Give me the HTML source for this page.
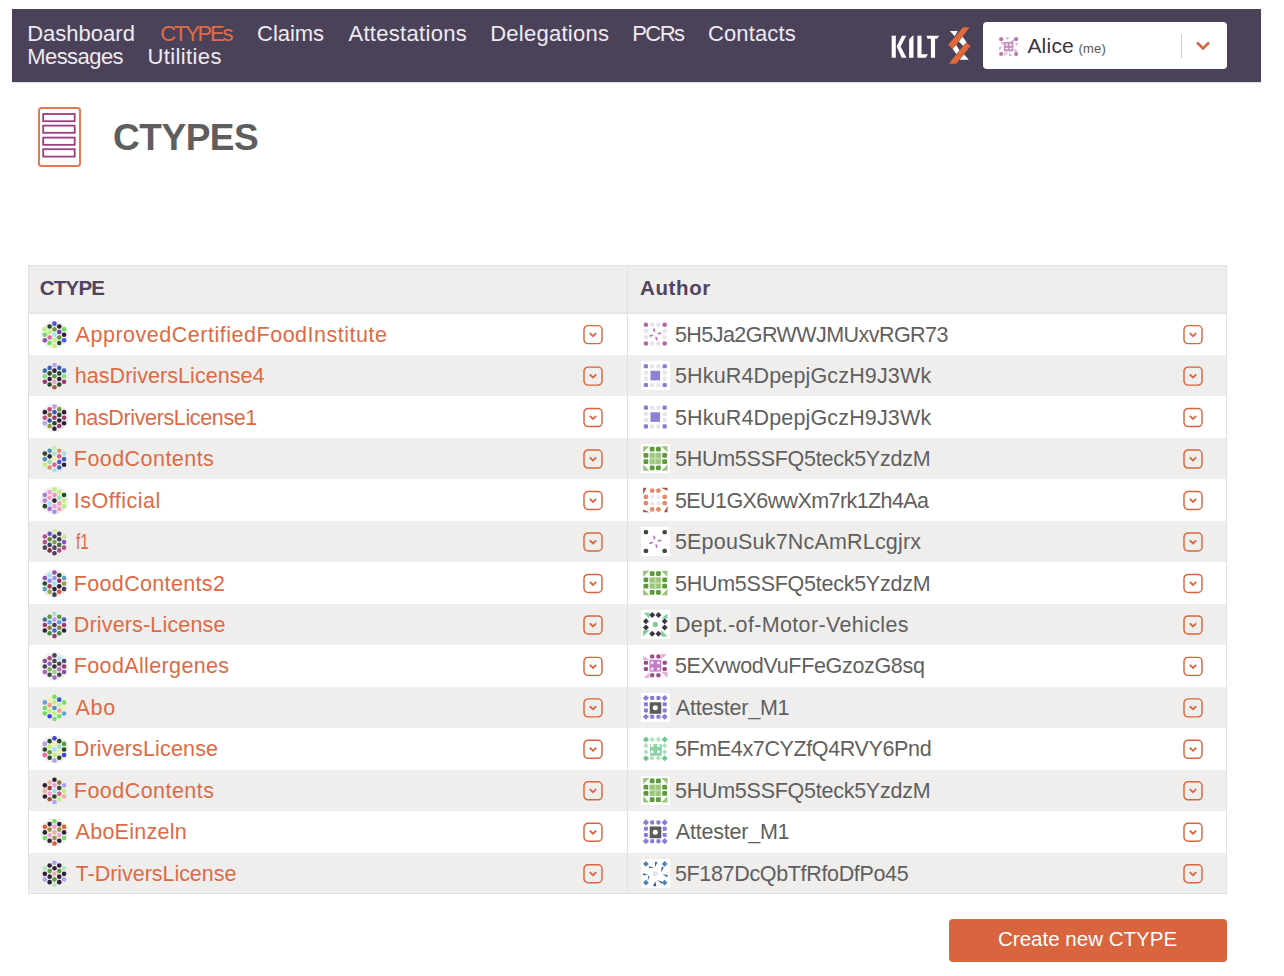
<!DOCTYPE html>
<html><head><meta charset="utf-8"><title>KILT CTYPEs</title>
<style>
*{margin:0;padding:0;box-sizing:border-box}
html,body{width:1284px;height:976px;overflow:hidden;background:#fff}
body{position:relative;font-family:"Liberation Sans",sans-serif}
.t{position:absolute;white-space:nowrap;line-height:normal}
.bl{display:inline-block;width:0;height:0;vertical-align:baseline}
.ic{position:absolute;display:block}
.jd{position:absolute;width:29px;height:29px;background:#fff}
.box{position:absolute}
</style></head><body>

<div class="box" style="left:12px;top:9px;width:1249px;height:73px;background:#4b425a;box-shadow:0 1px 1px rgba(0,0,0,0.12)"></div>
<svg class="ic" style="left:886px;top:30px" width="56" height="32" viewBox="0 0 1284 734"><g fill="#fff">
<rect x="130" y="130" width="95" height="505"/>
<polygon points="245,380 365,130 465,130 335,380 470,635 360,635"/>
<polygon points="530,210 610,130 630,130 630,635 530,635"/>
<polygon points="720,130 815,130 815,555 965,555 910,635 720,635"/>
<polygon points="930,130 1220,130 1170,200 1125,200 1125,635 1030,635 1030,200 950,200"/>
</g></svg>
<svg class="ic" style="left:940px;top:22px" width="40" height="48" viewBox="0 0 813 976">
<g fill="#fff">
<polygon points="200,185 360,185 300,290"/>
<polygon points="380,390 460,300 540,410 470,490"/>
<polygon points="255,545 330,470 400,580 330,650"/>
<polygon points="490,660 585,770 395,770"/>
</g><g fill="#e0683a">
<polygon points="470,105 600,105 330,470 255,545 165,465"/>
<polygon points="530,410 620,490 330,850 180,850 470,490"/>
</g></svg>
<div class="box" style="left:983px;top:22px;width:244px;height:47px;background:#fff;border-radius:4px"></div>
<div class="box" style="left:1181px;top:34px;width:1px;height:24px;background:#cfcfcf"></div>
<svg class="ic" style="left:1194px;top:40px" width="18" height="12" viewBox="0 0 18 12"><polyline points="3,2.5 9,8.5 15,2.5" fill="none" stroke="#d9653e" stroke-width="2.6"/></svg>
<svg class="ic" style="left:995px;top:33px" width="28" height="28" viewBox="0 0 976 976">
<g fill="#dfb0d8">
<polygon points="350,150 480,150 455,265"/>
<polygon points="520,300 690,190 650,310"/>
<polygon points="170,310 300,310 290,430"/>
<polygon points="720,350 820,350 720,480"/>
<polygon points="140,490 260,490 140,610"/>
<polygon points="320,690 460,670 330,810"/>
<polygon points="490,690 610,800 490,800"/>
<polygon points="680,540 800,650 680,660"/>
</g>
<g fill="#b87aa8"><circle cx="215" cy="215" r="72"/><circle cx="735" cy="215" r="72"/><circle cx="215" cy="730" r="72"/><circle cx="735" cy="730" r="72"/></g>
<rect x="310" y="310" width="330" height="330" fill="#c48fbc"/>
<g fill="#fbf3f8"><ellipse cx="405" cy="410" rx="35" ry="55"/><ellipse cx="545" cy="410" rx="35" ry="55"/><ellipse cx="410" cy="545" rx="50" ry="28"/><ellipse cx="545" cy="545" rx="50" ry="28"/></g>
</svg>
<svg class="ic" style="left:37px;top:106px" width="45" height="62" viewBox="0 0 45 62">
<rect x="2" y="2" width="41" height="58" rx="2.5" fill="none" stroke="#e07a56" stroke-width="2"/>
<g fill="none" stroke="#9a3f7e" stroke-width="1.8">
<rect x="6.2" y="8" width="31.5" height="7.2"/><rect x="6.2" y="19.6" width="31.5" height="7.2"/>
<rect x="6.2" y="31.6" width="31.5" height="7.2"/><rect x="6.2" y="43.2" width="31.5" height="7.4"/>
</g></svg>
<div class="box" style="left:29px;top:266px;width:1197px;height:47px;background:#efeeed"></div>
<div class="box" style="left:29px;top:312px;width:1197px;height:2px;background:#e3e5eb"></div>
<div class="box" style="left:29px;top:354.87px;width:1197px;height:41.47px;background:#efeeed"></div>
<div class="box" style="left:29px;top:437.81px;width:1197px;height:41.47px;background:#efeeed"></div>
<div class="box" style="left:29px;top:520.75px;width:1197px;height:41.47px;background:#efeeed"></div>
<div class="box" style="left:29px;top:603.69px;width:1197px;height:41.47px;background:#efeeed"></div>
<div class="box" style="left:29px;top:686.63px;width:1197px;height:41.47px;background:#efeeed"></div>
<div class="box" style="left:29px;top:769.57px;width:1197px;height:41.47px;background:#efeeed"></div>
<div class="box" style="left:29px;top:852.51px;width:1197px;height:41.47px;background:#efeeed"></div>
<div class="box" style="left:627px;top:266px;width:1px;height:627px;background:#dfe1e8"></div>
<svg class="ic" style="left:39px;top:319px" width="31" height="31" viewBox="-15.45 -15.74 31 31"><circle cx="0" cy="0" r="14" fill="#eeeeee"/><circle cx="0" cy="-11.1" r="2.3" fill="#5050e0"/><circle cx="-4.8" cy="-8.3" r="2.3" fill="#2a4a2a"/><circle cx="4.8" cy="-8.3" r="2.3" fill="#302038"/><circle cx="-9.6" cy="-5.55" r="2.3" fill="#c0f080"/><circle cx="0" cy="-5.55" r="2.3" fill="#6a9a40"/><circle cx="9.6" cy="-5.55" r="2.3" fill="#70e060"/><circle cx="-4.8" cy="-2.8" r="2.3" fill="#c0f080"/><circle cx="4.8" cy="-2.8" r="2.3" fill="#7040a0"/><circle cx="-9.6" cy="0" r="2.3" fill="#70e060"/><circle cx="0" cy="0" r="2.3" fill="#a0e8e8"/><circle cx="9.6" cy="0" r="2.3" fill="#302038"/><circle cx="-4.8" cy="2.8" r="2.3" fill="#e070a0"/><circle cx="4.8" cy="2.8" r="2.3" fill="#6a9a40"/><circle cx="-9.6" cy="5.55" r="2.3" fill="#9050b0"/><circle cx="0" cy="5.55" r="2.3" fill="#c0f080"/><circle cx="9.6" cy="5.55" r="2.3" fill="#5050f0"/><circle cx="-4.8" cy="8.3" r="2.3" fill="#70e060"/><circle cx="4.8" cy="8.3" r="2.3" fill="#2a4a2a"/><circle cx="0" cy="11.1" r="2.3" fill="#c0f080"/></svg>
<div class="jd" style="left:641px;top:320px"><svg width="29" height="29" viewBox="-1.80 -1.63 29 29" style="position:absolute;left:0;top:0"><circle cx="3.125" cy="3.125" r="2.3" fill="#b565a7"/><circle cx="21.875" cy="3.125" r="2.3" fill="#b565a7"/><circle cx="3.125" cy="21.875" r="2.3" fill="#b565a7"/><circle cx="21.875" cy="21.875" r="2.3" fill="#b565a7"/><circle cx="9.375" cy="3.125" r="2.2" fill="#e4e4ea"/><circle cx="15.625" cy="3.125" r="2.2" fill="#e4e4ea"/><circle cx="3.125" cy="9.375" r="2.2" fill="#e4e4ea"/><circle cx="21.875" cy="9.375" r="2.2" fill="#e4e4ea"/><circle cx="3.125" cy="15.625" r="2.2" fill="#e4e4ea"/><circle cx="21.875" cy="15.625" r="2.2" fill="#e4e4ea"/><circle cx="9.375" cy="21.875" r="2.2" fill="#e4e4ea"/><circle cx="15.625" cy="21.875" r="2.2" fill="#e4e4ea"/><ellipse cx="12.5" cy="8.5" rx="0.95" ry="2.1" fill="#c070b8" transform="rotate(-15 12.5 12.8)"/><ellipse cx="12.5" cy="8.5" rx="0.95" ry="2.1" fill="#c070b8" transform="rotate(75 12.5 12.8)"/><ellipse cx="12.5" cy="8.5" rx="0.95" ry="2.1" fill="#c070b8" transform="rotate(165 12.5 12.8)"/><ellipse cx="12.5" cy="8.5" rx="0.95" ry="2.1" fill="#c070b8" transform="rotate(255 12.5 12.8)"/></svg></div>
<svg class="ic" style="left:583px;top:324px" width="21" height="21" viewBox="0.00 -0.63 21 21"><rect x="1" y="1" width="18" height="18" rx="4" fill="none" stroke="#d9653e" stroke-width="1.45"/><polyline points="6.8,8.4 10,11.5 13.2,8.4" fill="none" stroke="#d9653e" stroke-width="1.8"/></svg>
<svg class="ic" style="left:1183px;top:324px" width="21" height="21" viewBox="0.00 -0.63 21 21"><rect x="1" y="1" width="18" height="18" rx="4" fill="none" stroke="#d9653e" stroke-width="1.45"/><polyline points="6.8,8.4 10,11.5 13.2,8.4" fill="none" stroke="#d9653e" stroke-width="1.8"/></svg>
<svg class="ic" style="left:39px;top:361px" width="31" height="31" viewBox="-15.45 -15.20 31 31"><circle cx="0" cy="0" r="14" fill="#eeeeee"/><circle cx="0" cy="-11.1" r="2.3" fill="#c0a0f0"/><circle cx="-4.8" cy="-8.3" r="2.3" fill="#4060b0"/><circle cx="4.8" cy="-8.3" r="2.3" fill="#4060b0"/><circle cx="-9.6" cy="-5.55" r="2.3" fill="#4070b0"/><circle cx="0" cy="-5.55" r="2.3" fill="#302038"/><circle cx="9.6" cy="-5.55" r="2.3" fill="#4060b0"/><circle cx="-4.8" cy="-2.8" r="2.3" fill="#2a4a2a"/><circle cx="4.8" cy="-2.8" r="2.3" fill="#2a4a2a"/><circle cx="-9.6" cy="0" r="2.3" fill="#80e080"/><circle cx="0" cy="0" r="2.3" fill="#5a9a40"/><circle cx="9.6" cy="0" r="2.3" fill="#80e080"/><circle cx="-4.8" cy="2.8" r="2.3" fill="#302038"/><circle cx="4.8" cy="2.8" r="2.3" fill="#302038"/><circle cx="-9.6" cy="5.55" r="2.3" fill="#9a3a6a"/><circle cx="0" cy="5.55" r="2.3" fill="#f0a0c0"/><circle cx="9.6" cy="5.55" r="2.3" fill="#9a3a6a"/><circle cx="-4.8" cy="8.3" r="2.3" fill="#2a4a2a"/><circle cx="4.8" cy="8.3" r="2.3" fill="#2a4a2a"/><circle cx="0" cy="11.1" r="2.3" fill="#b05a3a"/></svg>
<div class="jd" style="left:641px;top:361px"><svg width="29" height="29" viewBox="-1.80 -2.10 29 29" style="position:absolute;left:0;top:0"><rect x="1.025" y="1.025" width="4.2" height="4.2" rx="1.2" fill="#8a7bd3"/><rect x="19.775" y="1.025" width="4.2" height="4.2" rx="1.2" fill="#8a7bd3"/><rect x="1.025" y="19.775" width="4.2" height="4.2" rx="1.2" fill="#8a7bd3"/><rect x="19.775" y="19.775" width="4.2" height="4.2" rx="1.2" fill="#8a7bd3"/><circle cx="9.375" cy="3.125" r="2.2" fill="#e4e4ea"/><circle cx="15.625" cy="3.125" r="2.2" fill="#e4e4ea"/><circle cx="3.125" cy="9.375" r="2.2" fill="#e4e4ea"/><circle cx="21.875" cy="9.375" r="2.2" fill="#e4e4ea"/><circle cx="3.125" cy="15.625" r="2.2" fill="#e4e4ea"/><circle cx="21.875" cy="15.625" r="2.2" fill="#e4e4ea"/><circle cx="9.375" cy="21.875" r="2.2" fill="#e4e4ea"/><circle cx="15.625" cy="21.875" r="2.2" fill="#e4e4ea"/><rect x="7.7" y="7.7" width="9.6" height="9.6" fill="#8f80d6"/></svg></div>
<svg class="ic" style="left:583px;top:366px" width="21" height="21" viewBox="0.00 -0.10 21 21"><rect x="1" y="1" width="18" height="18" rx="4" fill="none" stroke="#d9653e" stroke-width="1.45"/><polyline points="6.8,8.4 10,11.5 13.2,8.4" fill="none" stroke="#d9653e" stroke-width="1.8"/></svg>
<svg class="ic" style="left:1183px;top:366px" width="21" height="21" viewBox="0.00 -0.10 21 21"><rect x="1" y="1" width="18" height="18" rx="4" fill="none" stroke="#d9653e" stroke-width="1.45"/><polyline points="6.8,8.4 10,11.5 13.2,8.4" fill="none" stroke="#d9653e" stroke-width="1.8"/></svg>
<svg class="ic" style="left:39px;top:402px" width="31" height="31" viewBox="-15.45 -15.68 31 31"><circle cx="0" cy="0" r="14" fill="#eeeeee"/><circle cx="0" cy="-11.1" r="2.3" fill="#c0a0f0"/><circle cx="-4.8" cy="-8.3" r="2.3" fill="#c05070"/><circle cx="4.8" cy="-8.3" r="2.3" fill="#7a9a40"/><circle cx="-9.6" cy="-5.55" r="2.3" fill="#302038"/><circle cx="0" cy="-5.55" r="2.3" fill="#4060b0"/><circle cx="9.6" cy="-5.55" r="2.3" fill="#302038"/><circle cx="-4.8" cy="-2.8" r="2.3" fill="#8a6a30"/><circle cx="4.8" cy="-2.8" r="2.3" fill="#2a4030"/><circle cx="-9.6" cy="0" r="2.3" fill="#c05080"/><circle cx="0" cy="0" r="2.3" fill="#9a3a6a"/><circle cx="9.6" cy="0" r="2.3" fill="#9a3a6a"/><circle cx="-4.8" cy="2.8" r="2.3" fill="#4050a0"/><circle cx="4.8" cy="2.8" r="2.3" fill="#302038"/><circle cx="-9.6" cy="5.55" r="2.3" fill="#c0a0f0"/><circle cx="0" cy="5.55" r="2.3" fill="#2a4a2a"/><circle cx="9.6" cy="5.55" r="2.3" fill="#302038"/><circle cx="-4.8" cy="8.3" r="2.3" fill="#8aa040"/><circle cx="4.8" cy="8.3" r="2.3" fill="#9a3a6a"/><circle cx="0" cy="11.1" r="2.3" fill="#302038"/></svg>
<div class="jd" style="left:641px;top:403px"><svg width="29" height="29" viewBox="-1.80 -1.57 29 29" style="position:absolute;left:0;top:0"><rect x="1.025" y="1.025" width="4.2" height="4.2" rx="1.2" fill="#8a7bd3"/><rect x="19.775" y="1.025" width="4.2" height="4.2" rx="1.2" fill="#8a7bd3"/><rect x="1.025" y="19.775" width="4.2" height="4.2" rx="1.2" fill="#8a7bd3"/><rect x="19.775" y="19.775" width="4.2" height="4.2" rx="1.2" fill="#8a7bd3"/><circle cx="9.375" cy="3.125" r="2.2" fill="#e4e4ea"/><circle cx="15.625" cy="3.125" r="2.2" fill="#e4e4ea"/><circle cx="3.125" cy="9.375" r="2.2" fill="#e4e4ea"/><circle cx="21.875" cy="9.375" r="2.2" fill="#e4e4ea"/><circle cx="3.125" cy="15.625" r="2.2" fill="#e4e4ea"/><circle cx="21.875" cy="15.625" r="2.2" fill="#e4e4ea"/><circle cx="9.375" cy="21.875" r="2.2" fill="#e4e4ea"/><circle cx="15.625" cy="21.875" r="2.2" fill="#e4e4ea"/><rect x="7.7" y="7.7" width="9.6" height="9.6" fill="#8f80d6"/></svg></div>
<svg class="ic" style="left:583px;top:407px" width="21" height="21" viewBox="0.00 -0.57 21 21"><rect x="1" y="1" width="18" height="18" rx="4" fill="none" stroke="#d9653e" stroke-width="1.45"/><polyline points="6.8,8.4 10,11.5 13.2,8.4" fill="none" stroke="#d9653e" stroke-width="1.8"/></svg>
<svg class="ic" style="left:1183px;top:407px" width="21" height="21" viewBox="0.00 -0.57 21 21"><rect x="1" y="1" width="18" height="18" rx="4" fill="none" stroke="#d9653e" stroke-width="1.45"/><polyline points="6.8,8.4 10,11.5 13.2,8.4" fill="none" stroke="#d9653e" stroke-width="1.8"/></svg>
<svg class="ic" style="left:39px;top:444px" width="31" height="31" viewBox="-15.45 -15.14 31 31"><circle cx="0" cy="0" r="14" fill="#eeeeee"/><circle cx="0" cy="-11.1" r="2.3" fill="#c0f0a0"/><circle cx="-4.8" cy="-8.3" r="2.3" fill="#5090b0"/><circle cx="4.8" cy="-8.3" r="2.3" fill="#e09070"/><circle cx="-9.6" cy="-5.55" r="2.3" fill="#2a4a2a"/><circle cx="0" cy="-5.55" r="2.3" fill="#b0e0c0"/><circle cx="9.6" cy="-5.55" r="2.3" fill="#a0e0e0"/><circle cx="-4.8" cy="-2.8" r="2.3" fill="#302038"/><circle cx="4.8" cy="-2.8" r="2.3" fill="#e06090"/><circle cx="-9.6" cy="0" r="2.3" fill="#5090b0"/><circle cx="0" cy="0" r="2.3" fill="#f0f0a0"/><circle cx="9.6" cy="0" r="2.3" fill="#4060b0"/><circle cx="-4.8" cy="2.8" r="2.3" fill="#a0e0b0"/><circle cx="4.8" cy="2.8" r="2.3" fill="#5050e0"/><circle cx="-9.6" cy="5.55" r="2.3" fill="#c0f080"/><circle cx="0" cy="5.55" r="2.3" fill="#e06090"/><circle cx="9.6" cy="5.55" r="2.3" fill="#302038"/><circle cx="-4.8" cy="8.3" r="2.3" fill="#e09070"/><circle cx="4.8" cy="8.3" r="2.3" fill="#4060b0"/><circle cx="0" cy="11.1" r="2.3" fill="#a0e0f0"/></svg>
<div class="jd" style="left:641px;top:444px"><svg width="29" height="29" viewBox="-1.80 -2.04 29 29" style="position:absolute;left:0;top:0"><polygon points="0.3,0.3 6.5625,0.3 0.3,6.5625" fill="#9cc57c"/><polygon points="24.7,0.3 24.7,6.5625 18.4375,0.3" fill="#9cc57c"/><polygon points="0.3,24.7 0.3,18.4375 6.5625,24.7" fill="#9cc57c"/><polygon points="24.7,24.7 18.4375,24.7 24.7,18.4375" fill="#9cc57c"/><rect x="6.975" y="0.7250000000000001" width="4.8" height="4.8" rx="1.2" fill="#5b9a3d"/><rect x="13.225" y="0.7250000000000001" width="4.8" height="4.8" rx="1.2" fill="#5b9a3d"/><rect x="0.7250000000000001" y="6.975" width="4.8" height="4.8" rx="1.2" fill="#5b9a3d"/><rect x="19.475" y="6.975" width="4.8" height="4.8" rx="1.2" fill="#5b9a3d"/><rect x="0.7250000000000001" y="13.225" width="4.8" height="4.8" rx="1.2" fill="#5b9a3d"/><rect x="19.475" y="13.225" width="4.8" height="4.8" rx="1.2" fill="#5b9a3d"/><rect x="6.975" y="19.475" width="4.8" height="4.8" rx="1.2" fill="#5b9a3d"/><rect x="13.225" y="19.475" width="4.8" height="4.8" rx="1.2" fill="#5b9a3d"/><rect x="6.6" y="6.6" width="11.8" height="11.8" fill="#bcdca4"/><rect x="7.175" y="7.175" width="4.4" height="4.4" rx="0.5" fill="#9cc57c"/><rect x="13.425" y="7.175" width="4.4" height="4.4" rx="0.5" fill="#9cc57c"/><rect x="7.175" y="13.425" width="4.4" height="4.4" rx="0.5" fill="#9cc57c"/><rect x="13.425" y="13.425" width="4.4" height="4.4" rx="0.5" fill="#9cc57c"/></svg></div>
<svg class="ic" style="left:583px;top:449px" width="21" height="21" viewBox="0.00 -0.04 21 21"><rect x="1" y="1" width="18" height="18" rx="4" fill="none" stroke="#d9653e" stroke-width="1.45"/><polyline points="6.8,8.4 10,11.5 13.2,8.4" fill="none" stroke="#d9653e" stroke-width="1.8"/></svg>
<svg class="ic" style="left:1183px;top:449px" width="21" height="21" viewBox="0.00 -0.04 21 21"><rect x="1" y="1" width="18" height="18" rx="4" fill="none" stroke="#d9653e" stroke-width="1.45"/><polyline points="6.8,8.4 10,11.5 13.2,8.4" fill="none" stroke="#d9653e" stroke-width="1.8"/></svg>
<svg class="ic" style="left:39px;top:485px" width="31" height="31" viewBox="-15.45 -15.62 31 31"><circle cx="0" cy="0" r="14" fill="#eeeeee"/><circle cx="0" cy="-11.1" r="2.3" fill="#c0f080"/><circle cx="-4.8" cy="-8.3" r="2.3" fill="#f0a0d0"/><circle cx="4.8" cy="-8.3" r="2.3" fill="#c0f080"/><circle cx="-9.6" cy="-5.55" r="2.3" fill="#a080e0"/><circle cx="0" cy="-5.55" r="2.3" fill="#f090c0"/><circle cx="9.6" cy="-5.55" r="2.3" fill="#2a4a2a"/><circle cx="-4.8" cy="-2.8" r="2.3" fill="#f0a0c0"/><circle cx="4.8" cy="-2.8" r="2.3" fill="#a0e0b0"/><circle cx="-9.6" cy="0" r="2.3" fill="#c080d0"/><circle cx="0" cy="0" r="2.3" fill="#302038"/><circle cx="9.6" cy="0" r="2.3" fill="#c0f080"/><circle cx="-4.8" cy="2.8" r="2.3" fill="#a0e0f0"/><circle cx="4.8" cy="2.8" r="2.3" fill="#f0a0c0"/><circle cx="-9.6" cy="5.55" r="2.3" fill="#2a4a2a"/><circle cx="0" cy="5.55" r="2.3" fill="#f0a0d0"/><circle cx="9.6" cy="5.55" r="2.3" fill="#c0f080"/><circle cx="-4.8" cy="8.3" r="2.3" fill="#b070d0"/><circle cx="4.8" cy="8.3" r="2.3" fill="#f0a0c0"/><circle cx="0" cy="11.1" r="2.3" fill="#a090f0"/></svg>
<div class="jd" style="left:641px;top:486px"><svg width="29" height="29" viewBox="-1.80 -1.51 29 29" style="position:absolute;left:0;top:0"><polygon points="0.3,0.3 3.75,0.3 0.3,6.875000000000001" fill="#a8503e"/><polygon points="18.125,0.3 24.7,0.3 24.7,3.125" fill="#a8503e"/><polygon points="0.3,21.875 0.3,24.7 6.875000000000001,24.7" fill="#a8503e"/><polygon points="24.7,18.125 24.7,24.7 21.25,24.7" fill="#a8503e"/><circle cx="9.375" cy="3.125" r="2.4" fill="#e38a6c"/><circle cx="15.625" cy="3.125" r="2.4" fill="#e38a6c"/><circle cx="3.125" cy="9.375" r="2.4" fill="#e38a6c"/><circle cx="21.875" cy="9.375" r="2.4" fill="#e38a6c"/><circle cx="3.125" cy="15.625" r="2.4" fill="#e38a6c"/><circle cx="21.875" cy="15.625" r="2.4" fill="#e38a6c"/><circle cx="9.375" cy="21.875" r="2.4" fill="#e38a6c"/><circle cx="15.625" cy="21.875" r="2.4" fill="#e38a6c"/><circle cx="9.375" cy="9.375" r="2.0" fill="#e8e8ec"/><circle cx="15.625" cy="9.375" r="2.0" fill="#e8e8ec"/><circle cx="9.375" cy="15.625" r="2.0" fill="#e8e8ec"/><circle cx="15.625" cy="15.625" r="2.0" fill="#e8e8ec"/></svg></div>
<svg class="ic" style="left:583px;top:490px" width="21" height="21" viewBox="0.00 -0.51 21 21"><rect x="1" y="1" width="18" height="18" rx="4" fill="none" stroke="#d9653e" stroke-width="1.45"/><polyline points="6.8,8.4 10,11.5 13.2,8.4" fill="none" stroke="#d9653e" stroke-width="1.8"/></svg>
<svg class="ic" style="left:1183px;top:490px" width="21" height="21" viewBox="0.00 -0.51 21 21"><rect x="1" y="1" width="18" height="18" rx="4" fill="none" stroke="#d9653e" stroke-width="1.45"/><polyline points="6.8,8.4 10,11.5 13.2,8.4" fill="none" stroke="#d9653e" stroke-width="1.8"/></svg>
<svg class="ic" style="left:39px;top:527px" width="31" height="31" viewBox="-15.45 -15.08 31 31"><circle cx="0" cy="0" r="14" fill="#eeeeee"/><circle cx="0" cy="-11.1" r="2.3" fill="#d0f0a0"/><circle cx="-4.8" cy="-8.3" r="2.3" fill="#7050c0"/><circle cx="4.8" cy="-8.3" r="2.3" fill="#404050"/><circle cx="-9.6" cy="-5.55" r="2.3" fill="#b05090"/><circle cx="0" cy="-5.55" r="2.3" fill="#504060"/><circle cx="9.6" cy="-5.55" r="2.3" fill="#d0e0a0"/><circle cx="-4.8" cy="-2.8" r="2.3" fill="#5a8a40"/><circle cx="4.8" cy="-2.8" r="2.3" fill="#404050"/><circle cx="-9.6" cy="0" r="2.3" fill="#b05090"/><circle cx="0" cy="0" r="2.3" fill="#80a050"/><circle cx="9.6" cy="0" r="2.3" fill="#8050c0"/><circle cx="-4.8" cy="2.8" r="2.3" fill="#504060"/><circle cx="4.8" cy="2.8" r="2.3" fill="#4a6a40"/><circle cx="-9.6" cy="5.55" r="2.3" fill="#504060"/><circle cx="0" cy="5.55" r="2.3" fill="#504060"/><circle cx="9.6" cy="5.55" r="2.3" fill="#b05090"/><circle cx="-4.8" cy="8.3" r="2.3" fill="#803050"/><circle cx="4.8" cy="8.3" r="2.3" fill="#b05080"/><circle cx="0" cy="11.1" r="2.3" fill="#504060"/></svg>
<div class="jd" style="left:641px;top:527px"><svg width="29" height="29" viewBox="-1.80 -1.98 29 29" style="position:absolute;left:0;top:0"><rect x="0.9249999999999998" y="0.9249999999999998" width="4.4" height="4.4" rx="1.6" fill="#454248"/><rect x="19.675" y="0.9249999999999998" width="4.4" height="4.4" rx="1.6" fill="#454248"/><rect x="0.9249999999999998" y="19.675" width="4.4" height="4.4" rx="1.6" fill="#454248"/><rect x="19.675" y="19.675" width="4.4" height="4.4" rx="1.6" fill="#454248"/><ellipse cx="12.5" cy="8.5" rx="0.95" ry="2.1" fill="#c070c8" transform="rotate(-15 12.5 12.8)"/><ellipse cx="12.5" cy="8.5" rx="0.95" ry="2.1" fill="#c070c8" transform="rotate(75 12.5 12.8)"/><ellipse cx="12.5" cy="8.5" rx="0.95" ry="2.1" fill="#c070c8" transform="rotate(165 12.5 12.8)"/><ellipse cx="12.5" cy="8.5" rx="0.95" ry="2.1" fill="#c070c8" transform="rotate(255 12.5 12.8)"/></svg></div>
<svg class="ic" style="left:583px;top:531px" width="21" height="21" viewBox="0.00 -0.98 21 21"><rect x="1" y="1" width="18" height="18" rx="4" fill="none" stroke="#d9653e" stroke-width="1.45"/><polyline points="6.8,8.4 10,11.5 13.2,8.4" fill="none" stroke="#d9653e" stroke-width="1.8"/></svg>
<svg class="ic" style="left:1183px;top:531px" width="21" height="21" viewBox="0.00 -0.98 21 21"><rect x="1" y="1" width="18" height="18" rx="4" fill="none" stroke="#d9653e" stroke-width="1.45"/><polyline points="6.8,8.4 10,11.5 13.2,8.4" fill="none" stroke="#d9653e" stroke-width="1.8"/></svg>
<svg class="ic" style="left:39px;top:568px" width="31" height="31" viewBox="-15.45 -15.55 31 31"><circle cx="0" cy="0" r="14" fill="#eeeeee"/><circle cx="0" cy="-11.1" r="2.3" fill="#9050c0"/><circle cx="-4.8" cy="-8.3" r="2.3" fill="#a0e0f0"/><circle cx="4.8" cy="-8.3" r="2.3" fill="#2a4a2a"/><circle cx="-9.6" cy="-5.55" r="2.3" fill="#9050c0"/><circle cx="0" cy="-5.55" r="2.3" fill="#a090f0"/><circle cx="9.6" cy="-5.55" r="2.3" fill="#60a0c0"/><circle cx="-4.8" cy="-2.8" r="2.3" fill="#8090f0"/><circle cx="4.8" cy="-2.8" r="2.3" fill="#903060"/><circle cx="-9.6" cy="0" r="2.3" fill="#2a4a2a"/><circle cx="0" cy="0" r="2.3" fill="#a0e0f0"/><circle cx="9.6" cy="0" r="2.3" fill="#90a050"/><circle cx="-4.8" cy="2.8" r="2.3" fill="#a04040"/><circle cx="4.8" cy="2.8" r="2.3" fill="#302038"/><circle cx="-9.6" cy="5.55" r="2.3" fill="#60a0c0"/><circle cx="0" cy="5.55" r="2.3" fill="#302038"/><circle cx="9.6" cy="5.55" r="2.3" fill="#404050"/><circle cx="-4.8" cy="8.3" r="2.3" fill="#a0a050"/><circle cx="4.8" cy="8.3" r="2.3" fill="#e05a40"/><circle cx="0" cy="11.1" r="2.3" fill="#404050"/></svg>
<div class="jd" style="left:641px;top:568px"><svg width="29" height="29" viewBox="-1.80 -2.45 29 29" style="position:absolute;left:0;top:0"><polygon points="0.3,0.3 6.5625,0.3 0.3,6.5625" fill="#9cc57c"/><polygon points="24.7,0.3 24.7,6.5625 18.4375,0.3" fill="#9cc57c"/><polygon points="0.3,24.7 0.3,18.4375 6.5625,24.7" fill="#9cc57c"/><polygon points="24.7,24.7 18.4375,24.7 24.7,18.4375" fill="#9cc57c"/><rect x="6.975" y="0.7250000000000001" width="4.8" height="4.8" rx="1.2" fill="#5b9a3d"/><rect x="13.225" y="0.7250000000000001" width="4.8" height="4.8" rx="1.2" fill="#5b9a3d"/><rect x="0.7250000000000001" y="6.975" width="4.8" height="4.8" rx="1.2" fill="#5b9a3d"/><rect x="19.475" y="6.975" width="4.8" height="4.8" rx="1.2" fill="#5b9a3d"/><rect x="0.7250000000000001" y="13.225" width="4.8" height="4.8" rx="1.2" fill="#5b9a3d"/><rect x="19.475" y="13.225" width="4.8" height="4.8" rx="1.2" fill="#5b9a3d"/><rect x="6.975" y="19.475" width="4.8" height="4.8" rx="1.2" fill="#5b9a3d"/><rect x="13.225" y="19.475" width="4.8" height="4.8" rx="1.2" fill="#5b9a3d"/><rect x="6.6" y="6.6" width="11.8" height="11.8" fill="#bcdca4"/><rect x="7.175" y="7.175" width="4.4" height="4.4" rx="0.5" fill="#9cc57c"/><rect x="13.425" y="7.175" width="4.4" height="4.4" rx="0.5" fill="#9cc57c"/><rect x="7.175" y="13.425" width="4.4" height="4.4" rx="0.5" fill="#9cc57c"/><rect x="13.425" y="13.425" width="4.4" height="4.4" rx="0.5" fill="#9cc57c"/></svg></div>
<svg class="ic" style="left:583px;top:573px" width="21" height="21" viewBox="0.00 -0.45 21 21"><rect x="1" y="1" width="18" height="18" rx="4" fill="none" stroke="#d9653e" stroke-width="1.45"/><polyline points="6.8,8.4 10,11.5 13.2,8.4" fill="none" stroke="#d9653e" stroke-width="1.8"/></svg>
<svg class="ic" style="left:1183px;top:573px" width="21" height="21" viewBox="0.00 -0.45 21 21"><rect x="1" y="1" width="18" height="18" rx="4" fill="none" stroke="#d9653e" stroke-width="1.45"/><polyline points="6.8,8.4 10,11.5 13.2,8.4" fill="none" stroke="#d9653e" stroke-width="1.8"/></svg>
<svg class="ic" style="left:39px;top:610px" width="31" height="31" viewBox="-15.45 -15.02 31 31"><circle cx="0" cy="0" r="14" fill="#eeeeee"/><circle cx="0" cy="-11.1" r="2.3" fill="#b0e0d0"/><circle cx="-4.8" cy="-8.3" r="2.3" fill="#5a9a40"/><circle cx="4.8" cy="-8.3" r="2.3" fill="#5a9a40"/><circle cx="-9.6" cy="-5.55" r="2.3" fill="#4070a0"/><circle cx="0" cy="-5.55" r="2.3" fill="#b0a0f0"/><circle cx="9.6" cy="-5.55" r="2.3" fill="#4060b0"/><circle cx="-4.8" cy="-2.8" r="2.3" fill="#60a0e0"/><circle cx="4.8" cy="-2.8" r="2.3" fill="#60a0e0"/><circle cx="-9.6" cy="0" r="2.3" fill="#9a3a6a"/><circle cx="0" cy="0" r="2.3" fill="#404050"/><circle cx="9.6" cy="0" r="2.3" fill="#9a3a6a"/><circle cx="-4.8" cy="2.8" r="2.3" fill="#8a7a40"/><circle cx="4.8" cy="2.8" r="2.3" fill="#8a7a40"/><circle cx="-9.6" cy="5.55" r="2.3" fill="#302038"/><circle cx="0" cy="5.55" r="2.3" fill="#3070e0"/><circle cx="9.6" cy="5.55" r="2.3" fill="#302038"/><circle cx="-4.8" cy="8.3" r="2.3" fill="#4a8a40"/><circle cx="4.8" cy="8.3" r="2.3" fill="#4a8a40"/><circle cx="0" cy="11.1" r="2.3" fill="#9a3a6a"/></svg>
<div class="jd" style="left:641px;top:610px"><svg width="29" height="29" viewBox="-1.80 -1.92 29 29" style="position:absolute;left:0;top:0"><polygon points="0.8999999999999999,0.8999999999999999 6.5625,0.8999999999999999 6.5625,6.5625" fill="#7ccf98"/><polygon points="18.4375,6.5625 24.7,1.5 24.7,6.5625" fill="#7ccf98"/><polygon points="0.3,18.4375 6.5625,18.4375 0.3,24.7" fill="#7ccf98"/><polygon points="18.4375,18.4375 24.7,24.7 18.4375,24.7" fill="#7ccf98"/><polygon points="9.375,0.125 12.375,3.125 9.375,6.125 6.375,3.125" fill="#3b3642"/><polygon points="15.625,0.125 18.625,3.125 15.625,6.125 12.625,3.125" fill="#3b3642"/><polygon points="3.125,6.375 6.125,9.375 3.125,12.375 0.125,9.375" fill="#3b3642"/><polygon points="21.875,6.375 24.875,9.375 21.875,12.375 18.875,9.375" fill="#3b3642"/><polygon points="3.125,12.625 6.125,15.625 3.125,18.625 0.125,15.625" fill="#3b3642"/><polygon points="21.875,12.625 24.875,15.625 21.875,18.625 18.875,15.625" fill="#3b3642"/><polygon points="9.375,18.875 12.375,21.875 9.375,24.875 6.375,21.875" fill="#3b3642"/><polygon points="15.625,18.875 18.625,21.875 15.625,24.875 12.625,21.875" fill="#3b3642"/><circle cx="12.5" cy="12.5" r="2.6" fill="#7ccf98"/></svg></div>
<svg class="ic" style="left:583px;top:614px" width="21" height="21" viewBox="0.00 -0.92 21 21"><rect x="1" y="1" width="18" height="18" rx="4" fill="none" stroke="#d9653e" stroke-width="1.45"/><polyline points="6.8,8.4 10,11.5 13.2,8.4" fill="none" stroke="#d9653e" stroke-width="1.8"/></svg>
<svg class="ic" style="left:1183px;top:614px" width="21" height="21" viewBox="0.00 -0.92 21 21"><rect x="1" y="1" width="18" height="18" rx="4" fill="none" stroke="#d9653e" stroke-width="1.45"/><polyline points="6.8,8.4 10,11.5 13.2,8.4" fill="none" stroke="#d9653e" stroke-width="1.8"/></svg>
<svg class="ic" style="left:39px;top:651px" width="31" height="31" viewBox="-15.45 -15.50 31 31"><circle cx="0" cy="0" r="14" fill="#eeeeee"/><circle cx="0" cy="-11.1" r="2.3" fill="#504060"/><circle cx="-4.8" cy="-8.3" r="2.3" fill="#a05080"/><circle cx="4.8" cy="-8.3" r="2.3" fill="#c0e0f0"/><circle cx="-9.6" cy="-5.55" r="2.3" fill="#8050a0"/><circle cx="0" cy="-5.55" r="2.3" fill="#504060"/><circle cx="9.6" cy="-5.55" r="2.3" fill="#405070"/><circle cx="-4.8" cy="-2.8" r="2.3" fill="#9060b0"/><circle cx="4.8" cy="-2.8" r="2.3" fill="#504060"/><circle cx="-9.6" cy="0" r="2.3" fill="#504060"/><circle cx="0" cy="0" r="2.3" fill="#303838"/><circle cx="9.6" cy="0" r="2.3" fill="#9a3a6a"/><circle cx="-4.8" cy="2.8" r="2.3" fill="#80b060"/><circle cx="4.8" cy="2.8" r="2.3" fill="#b070c0"/><circle cx="-9.6" cy="5.55" r="2.3" fill="#b060c0"/><circle cx="0" cy="5.55" r="2.3" fill="#a0d080"/><circle cx="9.6" cy="5.55" r="2.3" fill="#8050b0"/><circle cx="-4.8" cy="8.3" r="2.3" fill="#404848"/><circle cx="4.8" cy="8.3" r="2.3" fill="#504050"/><circle cx="0" cy="11.1" r="2.3" fill="#a070d0"/></svg>
<div class="jd" style="left:641px;top:651px"><svg width="29" height="29" viewBox="-1.80 -2.39 29 29" style="position:absolute;left:0;top:0"><polygon points="0.8,2.3 6.5625,6.5625 0.3,6.5625" fill="#e6b0d8"/><polygon points="18.4375,0.6 24.2,0.6 18.4375,6.0625" fill="#e6b0d8"/><polygon points="18.4375,18.4375 24.7,18.4375 24.7,24.7" fill="#e6b0d8"/><polygon points="6.5625,18.9375 6.5625,24.7 1.1,24.7" fill="#e6b0d8"/><rect x="7.275" y="1.025" width="4.2" height="4.2" rx="1.4" fill="#9a4a86"/><rect x="13.525" y="1.025" width="4.2" height="4.2" rx="1.4" fill="#9a4a86"/><rect x="1.025" y="7.275" width="4.2" height="4.2" rx="1.4" fill="#9a4a86"/><rect x="19.775" y="7.275" width="4.2" height="4.2" rx="1.4" fill="#9a4a86"/><rect x="1.025" y="13.525" width="4.2" height="4.2" rx="1.4" fill="#9a4a86"/><rect x="19.775" y="13.525" width="4.2" height="4.2" rx="1.4" fill="#9a4a86"/><rect x="7.275" y="19.775" width="4.2" height="4.2" rx="1.4" fill="#9a4a86"/><rect x="13.525" y="19.775" width="4.2" height="4.2" rx="1.4" fill="#9a4a86"/><rect x="6.7" y="6.4" width="11.7" height="11.8" fill="#c27ac6"/><rect x="7.975" y="7.975" width="2.8" height="2.8" rx="0.6" fill="#f6e6f4"/><rect x="14.225" y="7.975" width="2.8" height="2.8" rx="0.6" fill="#f6e6f4"/><rect x="7.975" y="14.225" width="2.8" height="2.8" rx="0.6" fill="#f6e6f4"/><rect x="14.225" y="14.225" width="2.8" height="2.8" rx="0.6" fill="#f6e6f4"/></svg></div>
<svg class="ic" style="left:583px;top:656px" width="21" height="21" viewBox="0.00 -0.39 21 21"><rect x="1" y="1" width="18" height="18" rx="4" fill="none" stroke="#d9653e" stroke-width="1.45"/><polyline points="6.8,8.4 10,11.5 13.2,8.4" fill="none" stroke="#d9653e" stroke-width="1.8"/></svg>
<svg class="ic" style="left:1183px;top:656px" width="21" height="21" viewBox="0.00 -0.39 21 21"><rect x="1" y="1" width="18" height="18" rx="4" fill="none" stroke="#d9653e" stroke-width="1.45"/><polyline points="6.8,8.4 10,11.5 13.2,8.4" fill="none" stroke="#d9653e" stroke-width="1.8"/></svg>
<svg class="ic" style="left:39px;top:692px" width="31" height="31" viewBox="-15.45 -15.97 31 31"><circle cx="0" cy="0" r="14" fill="#eeeeee"/><circle cx="0" cy="-11.1" r="2.3" fill="#70e060"/><circle cx="-4.8" cy="-8.3" r="2.3" fill="#f0f0a0"/><circle cx="4.8" cy="-8.3" r="2.3" fill="#4050d0"/><circle cx="-9.6" cy="-5.55" r="2.3" fill="#60a0e0"/><circle cx="0" cy="-5.55" r="2.3" fill="#c0f080"/><circle cx="9.6" cy="-5.55" r="2.3" fill="#70e060"/><circle cx="-4.8" cy="-2.8" r="2.3" fill="#f0a080"/><circle cx="4.8" cy="-2.8" r="2.3" fill="#c0f0a0"/><circle cx="-9.6" cy="0" r="2.3" fill="#70e060"/><circle cx="0" cy="0" r="2.3" fill="#5090b0"/><circle cx="9.6" cy="0" r="2.3" fill="#f0f0a0"/><circle cx="-4.8" cy="2.8" r="2.3" fill="#c0f080"/><circle cx="4.8" cy="2.8" r="2.3" fill="#f0a080"/><circle cx="-9.6" cy="5.55" r="2.3" fill="#70e060"/><circle cx="0" cy="5.55" r="2.3" fill="#c0f080"/><circle cx="9.6" cy="5.55" r="2.3" fill="#60a0e0"/><circle cx="-4.8" cy="8.3" r="2.3" fill="#4040e0"/><circle cx="4.8" cy="8.3" r="2.3" fill="#70e060"/><circle cx="0" cy="11.1" r="2.3" fill="#70e060"/></svg>
<div class="jd" style="left:641px;top:693px"><svg width="29" height="29" viewBox="-1.80 -1.87 29 29" style="position:absolute;left:0;top:0"><polygon points="3.125,0.02499999999999991 6.225,3.125 3.125,6.225 0.02499999999999991,3.125" fill="#8b7bd6"/><polygon points="21.875,0.02499999999999991 24.975,3.125 21.875,6.225 18.775,3.125" fill="#8b7bd6"/><polygon points="3.125,18.775 6.225,21.875 3.125,24.975 0.02499999999999991,21.875" fill="#8b7bd6"/><polygon points="21.875,18.775 24.975,21.875 21.875,24.975 18.775,21.875" fill="#8b7bd6"/><rect x="7.375" y="1.125" width="4.0" height="4.0" rx="0.8" fill="#8b7bd6"/><rect x="13.625" y="1.125" width="4.0" height="4.0" rx="0.8" fill="#8b7bd6"/><rect x="1.125" y="7.375" width="4.0" height="4.0" rx="0.8" fill="#8b7bd6"/><rect x="19.875" y="7.375" width="4.0" height="4.0" rx="0.8" fill="#8b7bd6"/><rect x="1.125" y="13.625" width="4.0" height="4.0" rx="0.8" fill="#8b7bd6"/><rect x="19.875" y="13.625" width="4.0" height="4.0" rx="0.8" fill="#8b7bd6"/><rect x="7.375" y="19.875" width="4.0" height="4.0" rx="0.8" fill="#8b7bd6"/><rect x="13.625" y="19.875" width="4.0" height="4.0" rx="0.8" fill="#8b7bd6"/><rect x="6.9" y="7.3" width="11.6" height="11.6" rx="0.6" fill="#5a5b5b"/><circle cx="12.5" cy="12.9" r="2.5" fill="#fff"/></svg></div>
<svg class="ic" style="left:583px;top:697px" width="21" height="21" viewBox="0.00 -0.87 21 21"><rect x="1" y="1" width="18" height="18" rx="4" fill="none" stroke="#d9653e" stroke-width="1.45"/><polyline points="6.8,8.4 10,11.5 13.2,8.4" fill="none" stroke="#d9653e" stroke-width="1.8"/></svg>
<svg class="ic" style="left:1183px;top:697px" width="21" height="21" viewBox="0.00 -0.87 21 21"><rect x="1" y="1" width="18" height="18" rx="4" fill="none" stroke="#d9653e" stroke-width="1.45"/><polyline points="6.8,8.4 10,11.5 13.2,8.4" fill="none" stroke="#d9653e" stroke-width="1.8"/></svg>
<svg class="ic" style="left:39px;top:734px" width="31" height="31" viewBox="-15.45 -15.44 31 31"><circle cx="0" cy="0" r="14" fill="#eeeeee"/><circle cx="0" cy="-11.1" r="2.3" fill="#4040e0"/><circle cx="-4.8" cy="-8.3" r="2.3" fill="#2a4a2a"/><circle cx="4.8" cy="-8.3" r="2.3" fill="#2a4a2a"/><circle cx="-9.6" cy="-5.55" r="2.3" fill="#b0a0f0"/><circle cx="0" cy="-5.55" r="2.3" fill="#f0f0a0"/><circle cx="9.6" cy="-5.55" r="2.3" fill="#5a9a40"/><circle cx="-4.8" cy="-2.8" r="2.3" fill="#c0f080"/><circle cx="4.8" cy="-2.8" r="2.3" fill="#a0e0c0"/><circle cx="-9.6" cy="0" r="2.3" fill="#2a4a2a"/><circle cx="0" cy="0" r="2.3" fill="#a0e0f0"/><circle cx="9.6" cy="0" r="2.3" fill="#2a4a2a"/><circle cx="-4.8" cy="2.8" r="2.3" fill="#6a9a40"/><circle cx="4.8" cy="2.8" r="2.3" fill="#f0f0a0"/><circle cx="-9.6" cy="5.55" r="2.3" fill="#f060a0"/><circle cx="0" cy="5.55" r="2.3" fill="#c0f080"/><circle cx="9.6" cy="5.55" r="2.3" fill="#4040e0"/><circle cx="-4.8" cy="8.3" r="2.3" fill="#2a4a2a"/><circle cx="4.8" cy="8.3" r="2.3" fill="#2a4a2a"/><circle cx="0" cy="11.1" r="2.3" fill="#b0a0f0"/></svg>
<div class="jd" style="left:641px;top:734px"><svg width="29" height="29" viewBox="-1.80 -2.34 29 29" style="position:absolute;left:0;top:0"><polygon points="3.125,0.125 6.125,3.125 3.125,6.125 0.125,3.125" fill="#6cc68c"/><polygon points="21.875,0.125 24.875,3.125 21.875,6.125 18.875,3.125" fill="#6cc68c"/><polygon points="3.125,18.875 6.125,21.875 3.125,24.875 0.125,21.875" fill="#6cc68c"/><polygon points="21.875,18.875 24.875,21.875 21.875,24.875 18.875,21.875" fill="#6cc68c"/><polygon points="9.375,0.5249999999999999 11.975,3.125 9.375,5.725 6.775,3.125" fill="#aee0bf"/><polygon points="15.625,0.5249999999999999 18.225,3.125 15.625,5.725 13.025,3.125" fill="#aee0bf"/><polygon points="3.125,6.775 5.725,9.375 3.125,11.975 0.5249999999999999,9.375" fill="#aee0bf"/><polygon points="21.875,6.775 24.475,9.375 21.875,11.975 19.275,9.375" fill="#aee0bf"/><polygon points="3.125,13.025 5.725,15.625 3.125,18.225 0.5249999999999999,15.625" fill="#aee0bf"/><polygon points="21.875,13.025 24.475,15.625 21.875,18.225 19.275,15.625" fill="#aee0bf"/><polygon points="9.375,19.275 11.975,21.875 9.375,24.475 6.775,21.875" fill="#aee0bf"/><polygon points="15.625,19.275 18.225,21.875 15.625,24.475 13.025,21.875" fill="#aee0bf"/><rect x="7.3" y="7.8" width="11.6" height="11.6" fill="#88d0a0"/><rect x="7.975" y="7.975" width="2.8" height="2.8" rx="0.8" fill="#ffffff"/><rect x="14.225" y="7.975" width="2.8" height="2.8" rx="0.8" fill="#ffffff"/><rect x="7.975" y="14.225" width="2.8" height="2.8" rx="0.8" fill="#ffffff"/><rect x="14.225" y="14.225" width="2.8" height="2.8" rx="0.8" fill="#ffffff"/></svg></div>
<svg class="ic" style="left:583px;top:739px" width="21" height="21" viewBox="0.00 -0.34 21 21"><rect x="1" y="1" width="18" height="18" rx="4" fill="none" stroke="#d9653e" stroke-width="1.45"/><polyline points="6.8,8.4 10,11.5 13.2,8.4" fill="none" stroke="#d9653e" stroke-width="1.8"/></svg>
<svg class="ic" style="left:1183px;top:739px" width="21" height="21" viewBox="0.00 -0.34 21 21"><rect x="1" y="1" width="18" height="18" rx="4" fill="none" stroke="#d9653e" stroke-width="1.45"/><polyline points="6.8,8.4 10,11.5 13.2,8.4" fill="none" stroke="#d9653e" stroke-width="1.8"/></svg>
<svg class="ic" style="left:39px;top:775px" width="31" height="31" viewBox="-15.45 -15.90 31 31"><circle cx="0" cy="0" r="14" fill="#eeeeee"/><circle cx="0" cy="-11.1" r="2.3" fill="#302038"/><circle cx="-4.8" cy="-8.3" r="2.3" fill="#f0b0a0"/><circle cx="4.8" cy="-8.3" r="2.3" fill="#8a7a40"/><circle cx="-9.6" cy="-5.55" r="2.3" fill="#302038"/><circle cx="0" cy="-5.55" r="2.3" fill="#f0a0d0"/><circle cx="9.6" cy="-5.55" r="2.3" fill="#b0a0f0"/><circle cx="-4.8" cy="-2.8" r="2.3" fill="#a04040"/><circle cx="4.8" cy="-2.8" r="2.3" fill="#2a4a2a"/><circle cx="-9.6" cy="0" r="2.3" fill="#f0b0a0"/><circle cx="0" cy="0" r="2.3" fill="#a0e0f0"/><circle cx="9.6" cy="0" r="2.3" fill="#c0f080"/><circle cx="-4.8" cy="2.8" r="2.3" fill="#f0a0d0"/><circle cx="4.8" cy="2.8" r="2.3" fill="#e06090"/><circle cx="-9.6" cy="5.55" r="2.3" fill="#302038"/><circle cx="0" cy="5.55" r="2.3" fill="#2a4a2a"/><circle cx="9.6" cy="5.55" r="2.3" fill="#f0b0a0"/><circle cx="-4.8" cy="8.3" r="2.3" fill="#a05040"/><circle cx="4.8" cy="8.3" r="2.3" fill="#c0f080"/><circle cx="0" cy="11.1" r="2.3" fill="#b0a0f0"/></svg>
<div class="jd" style="left:641px;top:776px"><svg width="29" height="29" viewBox="-1.80 -1.80 29 29" style="position:absolute;left:0;top:0"><polygon points="0.3,0.3 6.5625,0.3 0.3,6.5625" fill="#9cc57c"/><polygon points="24.7,0.3 24.7,6.5625 18.4375,0.3" fill="#9cc57c"/><polygon points="0.3,24.7 0.3,18.4375 6.5625,24.7" fill="#9cc57c"/><polygon points="24.7,24.7 18.4375,24.7 24.7,18.4375" fill="#9cc57c"/><rect x="6.975" y="0.7250000000000001" width="4.8" height="4.8" rx="1.2" fill="#5b9a3d"/><rect x="13.225" y="0.7250000000000001" width="4.8" height="4.8" rx="1.2" fill="#5b9a3d"/><rect x="0.7250000000000001" y="6.975" width="4.8" height="4.8" rx="1.2" fill="#5b9a3d"/><rect x="19.475" y="6.975" width="4.8" height="4.8" rx="1.2" fill="#5b9a3d"/><rect x="0.7250000000000001" y="13.225" width="4.8" height="4.8" rx="1.2" fill="#5b9a3d"/><rect x="19.475" y="13.225" width="4.8" height="4.8" rx="1.2" fill="#5b9a3d"/><rect x="6.975" y="19.475" width="4.8" height="4.8" rx="1.2" fill="#5b9a3d"/><rect x="13.225" y="19.475" width="4.8" height="4.8" rx="1.2" fill="#5b9a3d"/><rect x="6.6" y="6.6" width="11.8" height="11.8" fill="#bcdca4"/><rect x="7.175" y="7.175" width="4.4" height="4.4" rx="0.5" fill="#9cc57c"/><rect x="13.425" y="7.175" width="4.4" height="4.4" rx="0.5" fill="#9cc57c"/><rect x="7.175" y="13.425" width="4.4" height="4.4" rx="0.5" fill="#9cc57c"/><rect x="13.425" y="13.425" width="4.4" height="4.4" rx="0.5" fill="#9cc57c"/></svg></div>
<svg class="ic" style="left:583px;top:780px" width="21" height="21" viewBox="0.00 -0.80 21 21"><rect x="1" y="1" width="18" height="18" rx="4" fill="none" stroke="#d9653e" stroke-width="1.45"/><polyline points="6.8,8.4 10,11.5 13.2,8.4" fill="none" stroke="#d9653e" stroke-width="1.8"/></svg>
<svg class="ic" style="left:1183px;top:780px" width="21" height="21" viewBox="0.00 -0.80 21 21"><rect x="1" y="1" width="18" height="18" rx="4" fill="none" stroke="#d9653e" stroke-width="1.45"/><polyline points="6.8,8.4 10,11.5 13.2,8.4" fill="none" stroke="#d9653e" stroke-width="1.8"/></svg>
<svg class="ic" style="left:39px;top:817px" width="31" height="31" viewBox="-15.45 -15.38 31 31"><circle cx="0" cy="0" r="14" fill="#eeeeee"/><circle cx="0" cy="-11.1" r="2.3" fill="#70e060"/><circle cx="-4.8" cy="-8.3" r="2.3" fill="#302038"/><circle cx="4.8" cy="-8.3" r="2.3" fill="#302038"/><circle cx="-9.6" cy="-5.55" r="2.3" fill="#e06030"/><circle cx="0" cy="-5.55" r="2.3" fill="#f0a0d0"/><circle cx="9.6" cy="-5.55" r="2.3" fill="#e06030"/><circle cx="-4.8" cy="-2.8" r="2.3" fill="#a09050"/><circle cx="4.8" cy="-2.8" r="2.3" fill="#a09050"/><circle cx="-9.6" cy="0" r="2.3" fill="#302038"/><circle cx="0" cy="0" r="2.3" fill="#f0b0a0"/><circle cx="9.6" cy="0" r="2.3" fill="#302038"/><circle cx="-4.8" cy="2.8" r="2.3" fill="#f0a0d0"/><circle cx="4.8" cy="2.8" r="2.3" fill="#f0a0d0"/><circle cx="-9.6" cy="5.55" r="2.3" fill="#70e060"/><circle cx="0" cy="5.55" r="2.3" fill="#a09050"/><circle cx="9.6" cy="5.55" r="2.3" fill="#70e060"/><circle cx="-4.8" cy="8.3" r="2.3" fill="#302038"/><circle cx="4.8" cy="8.3" r="2.3" fill="#302038"/><circle cx="0" cy="11.1" r="2.3" fill="#e06030"/></svg>
<div class="jd" style="left:641px;top:817px"><svg width="29" height="29" viewBox="-1.80 -2.27 29 29" style="position:absolute;left:0;top:0"><polygon points="3.125,0.02499999999999991 6.225,3.125 3.125,6.225 0.02499999999999991,3.125" fill="#8b7bd6"/><polygon points="21.875,0.02499999999999991 24.975,3.125 21.875,6.225 18.775,3.125" fill="#8b7bd6"/><polygon points="3.125,18.775 6.225,21.875 3.125,24.975 0.02499999999999991,21.875" fill="#8b7bd6"/><polygon points="21.875,18.775 24.975,21.875 21.875,24.975 18.775,21.875" fill="#8b7bd6"/><rect x="7.375" y="1.125" width="4.0" height="4.0" rx="0.8" fill="#8b7bd6"/><rect x="13.625" y="1.125" width="4.0" height="4.0" rx="0.8" fill="#8b7bd6"/><rect x="1.125" y="7.375" width="4.0" height="4.0" rx="0.8" fill="#8b7bd6"/><rect x="19.875" y="7.375" width="4.0" height="4.0" rx="0.8" fill="#8b7bd6"/><rect x="1.125" y="13.625" width="4.0" height="4.0" rx="0.8" fill="#8b7bd6"/><rect x="19.875" y="13.625" width="4.0" height="4.0" rx="0.8" fill="#8b7bd6"/><rect x="7.375" y="19.875" width="4.0" height="4.0" rx="0.8" fill="#8b7bd6"/><rect x="13.625" y="19.875" width="4.0" height="4.0" rx="0.8" fill="#8b7bd6"/><rect x="6.9" y="7.3" width="11.6" height="11.6" rx="0.6" fill="#5a5b5b"/><circle cx="12.5" cy="12.9" r="2.5" fill="#fff"/></svg></div>
<svg class="ic" style="left:583px;top:822px" width="21" height="21" viewBox="0.00 -0.27 21 21"><rect x="1" y="1" width="18" height="18" rx="4" fill="none" stroke="#d9653e" stroke-width="1.45"/><polyline points="6.8,8.4 10,11.5 13.2,8.4" fill="none" stroke="#d9653e" stroke-width="1.8"/></svg>
<svg class="ic" style="left:1183px;top:822px" width="21" height="21" viewBox="0.00 -0.27 21 21"><rect x="1" y="1" width="18" height="18" rx="4" fill="none" stroke="#d9653e" stroke-width="1.45"/><polyline points="6.8,8.4 10,11.5 13.2,8.4" fill="none" stroke="#d9653e" stroke-width="1.8"/></svg>
<svg class="ic" style="left:39px;top:858px" width="31" height="31" viewBox="-15.45 -15.85 31 31"><circle cx="0" cy="0" r="14" fill="#eeeeee"/><circle cx="0" cy="-11.1" r="2.3" fill="#b0a0f0"/><circle cx="-4.8" cy="-8.3" r="2.3" fill="#302038"/><circle cx="4.8" cy="-8.3" r="2.3" fill="#302038"/><circle cx="-9.6" cy="-5.55" r="2.3" fill="#b0e8c0"/><circle cx="0" cy="-5.55" r="2.3" fill="#302038"/><circle cx="9.6" cy="-5.55" r="2.3" fill="#b0e8c0"/><circle cx="-4.8" cy="-2.8" r="2.3" fill="#5aa040"/><circle cx="4.8" cy="-2.8" r="2.3" fill="#5aa040"/><circle cx="-9.6" cy="0" r="2.3" fill="#302038"/><circle cx="0" cy="0" r="2.3" fill="#f0b0a0"/><circle cx="9.6" cy="0" r="2.3" fill="#302038"/><circle cx="-4.8" cy="2.8" r="2.3" fill="#302038"/><circle cx="4.8" cy="2.8" r="2.3" fill="#302038"/><circle cx="-9.6" cy="5.55" r="2.3" fill="#b0a0f0"/><circle cx="0" cy="5.55" r="2.3" fill="#5aa040"/><circle cx="9.6" cy="5.55" r="2.3" fill="#b0a0f0"/><circle cx="-4.8" cy="8.3" r="2.3" fill="#302038"/><circle cx="4.8" cy="8.3" r="2.3" fill="#302038"/><circle cx="0" cy="11.1" r="2.3" fill="#b0e8c0"/></svg>
<div class="jd" style="left:641px;top:859px"><svg width="29" height="29" viewBox="-1.80 -1.75 29 29" style="position:absolute;left:0;top:0"><polygon points="3.125,0.2250000000000001 6.025,3.125 3.125,6.025 0.2250000000000001,3.125" fill="#4a86b8"/><polygon points="21.875,0.2250000000000001 24.775,3.125 21.875,6.025 18.975,3.125" fill="#4a86b8"/><polygon points="3.125,18.975 6.025,21.875 3.125,24.775 0.2250000000000001,21.875" fill="#4a86b8"/><polygon points="21.875,18.975 24.775,21.875 21.875,24.775 18.975,21.875" fill="#4a86b8"/><polygon points="6,5.4 11,6.8 6.6,7.5" fill="#2f4e9e"/><polygon points="12.2,1.2 14.6,1.2 12.4,6.2" fill="#2f4e9e"/><polygon points="18.8,6.4 21,6.2 18.3,12" fill="#2f4e9e"/><polygon points="19.6,13.2 25,14.6 24.4,16.6" fill="#2f4e9e"/><polygon points="5.6,15 6.8,15.4 4.7,20.5" fill="#2f4e9e"/><polygon points="0.3,12.5 5.4,14.2 0.4,14.6" fill="#2f4e9e"/><polygon points="12.6,20.8 13.5,25.4 10.2,25.2" fill="#2f4e9e"/><polygon points="14.4,19.3 19.6,21.2 19,23" fill="#2f4e9e"/><circle cx="12.5" cy="12.8" r="2.6" fill="#e6e6ea"/></svg></div>
<svg class="ic" style="left:583px;top:863px" width="21" height="21" viewBox="0.00 -0.75 21 21"><rect x="1" y="1" width="18" height="18" rx="4" fill="none" stroke="#d9653e" stroke-width="1.45"/><polyline points="6.8,8.4 10,11.5 13.2,8.4" fill="none" stroke="#d9653e" stroke-width="1.8"/></svg>
<svg class="ic" style="left:1183px;top:863px" width="21" height="21" viewBox="0.00 -0.75 21 21"><rect x="1" y="1" width="18" height="18" rx="4" fill="none" stroke="#d9653e" stroke-width="1.45"/><polyline points="6.8,8.4 10,11.5 13.2,8.4" fill="none" stroke="#d9653e" stroke-width="1.8"/></svg>
<div class="box" style="left:28px;top:265px;width:1199px;height:629px;border:1px solid #dfe1e8"></div>
<div class="box" style="left:949px;top:919px;width:278px;height:43px;background:#d9653e;border-radius:4px"></div>
<div class="t" id="nav_dash" style="left:27.20px;top:20.91px;font-size:22px;font-weight:400;color:#eeebf0;letter-spacing:0.011px">Dashboard<i class="bl"></i></div>
<div class="t" id="nav_ctypes" style="left:160.34px;top:20.91px;font-size:22px;font-weight:400;color:#e06c42;letter-spacing:-2.250px">CTYPEs<i class="bl"></i></div>
<div class="t" id="nav_claims" style="left:257.10px;top:20.91px;font-size:22px;font-weight:400;color:#eeebf0;letter-spacing:-0.072px">Claims<i class="bl"></i></div>
<div class="t" id="nav_att" style="left:348.43px;top:20.91px;font-size:22px;font-weight:400;color:#eeebf0;letter-spacing:0.303px">Attestations<i class="bl"></i></div>
<div class="t" id="nav_del" style="left:490.15px;top:20.91px;font-size:22px;font-weight:400;color:#eeebf0;letter-spacing:0.270px">Delegations<i class="bl"></i></div>
<div class="t" id="nav_pcr" style="left:632.15px;top:20.91px;font-size:22px;font-weight:400;color:#eeebf0;letter-spacing:-1.530px">PCRs<i class="bl"></i></div>
<div class="t" id="nav_con" style="left:707.96px;top:20.91px;font-size:22px;font-weight:400;color:#eeebf0;letter-spacing:0.129px">Contacts<i class="bl"></i></div>
<div class="t" id="nav_msg" style="left:27.20px;top:44.01px;font-size:22px;font-weight:400;color:#eeebf0;letter-spacing:-0.553px">Messages<i class="bl"></i></div>
<div class="t" id="nav_util" style="left:147.39px;top:44.01px;font-size:22px;font-weight:400;color:#eeebf0;letter-spacing:0.394px">Utilities<i class="bl"></i></div>
<div class="t" id="alice" style="left:1027.38px;top:33.71px;font-size:21px;font-weight:400;color:#3b3441;letter-spacing:0.225px">Alice<i class="bl"></i></div>
<div class="t" id="me" style="left:1078.48px;top:40.70px;font-size:13px;font-weight:400;color:#555;letter-spacing:0.210px">(me)<i class="bl"></i></div>
<div class="t" id="title" style="left:113.10px;top:117.00px;font-size:37px;font-weight:700;color:#5e5e5e;letter-spacing:-0.486px">CTYPES<i class="bl"></i></div>
<div class="t" id="h_ctype" style="left:39.86px;top:276.40px;font-size:20.5px;font-weight:700;color:#4f4462;letter-spacing:-0.810px">CTYPE<i class="bl"></i></div>
<div class="t" id="h_author" style="left:640.10px;top:276.40px;font-size:20.5px;font-weight:700;color:#4f4462;letter-spacing:0.594px">Author<i class="bl"></i></div>
<div class="t" id="btn" style="left:998.05px;top:927.01px;font-size:20.5px;font-weight:400;color:#ffffff;letter-spacing:0.012px">Create new CTYPE<i class="bl"></i></div>
<div class="t" id="r0c" style="left:75.62px;top:322.71px;font-size:21.5px;font-weight:400;color:#dc6b45;letter-spacing:0.518px">ApprovedCertifiedFoodInstitute<i class="bl"></i></div>
<div class="t" id="r0a" style="left:674.96px;top:322.71px;font-size:21.5px;font-weight:400;color:#5f5f5f;letter-spacing:-0.549px">5H5Ja2GRWWJMUxvRGR73<i class="bl"></i></div>
<div class="t" id="r1c" style="left:74.72px;top:364.19px;font-size:21.5px;font-weight:400;color:#dc6b45;letter-spacing:0.058px">hasDriversLicense4<i class="bl"></i></div>
<div class="t" id="r1a" style="left:674.96px;top:364.19px;font-size:21.5px;font-weight:400;color:#5f5f5f;letter-spacing:0.152px">5HkuR4DpepjGczH9J3Wk<i class="bl"></i></div>
<div class="t" id="r2c" style="left:74.72px;top:405.65px;font-size:21.5px;font-weight:400;color:#dc6b45;letter-spacing:-0.365px">hasDriversLicense1<i class="bl"></i></div>
<div class="t" id="r2a" style="left:674.96px;top:405.65px;font-size:21.5px;font-weight:400;color:#5f5f5f;letter-spacing:0.152px">5HkuR4DpepjGczH9J3Wk<i class="bl"></i></div>
<div class="t" id="r3c" style="left:73.82px;top:447.11px;font-size:21.5px;font-weight:400;color:#dc6b45;letter-spacing:0.450px">FoodContents<i class="bl"></i></div>
<div class="t" id="r3a" style="left:674.96px;top:447.11px;font-size:21.5px;font-weight:400;color:#5f5f5f;letter-spacing:-0.256px">5HUm5SSFQ5teck5YzdzM<i class="bl"></i></div>
<div class="t" id="r4c" style="left:73.82px;top:488.59px;font-size:21.5px;font-weight:400;color:#dc6b45;letter-spacing:0.500px">IsOfficial<i class="bl"></i></div>
<div class="t" id="r4a" style="left:674.96px;top:488.59px;font-size:21.5px;font-weight:400;color:#5f5f5f;letter-spacing:-0.587px">5EU1GX6wwXm7rk1Zh4Aa<i class="bl"></i></div>
<div class="t" id="r5c" style="left:75.62px;top:530.07px;font-size:21.5px;font-weight:400;color:#dc6b45;letter-spacing:0.000px;transform:scaleX(0.7200);transform-origin:0 0">f1<i class="bl"></i></div>
<div class="t" id="r5a" style="left:674.96px;top:530.07px;font-size:21.5px;font-weight:400;color:#5f5f5f;letter-spacing:0.185px">5EpouSuk7NcAmRLcgjrx<i class="bl"></i></div>
<div class="t" id="r6c" style="left:73.82px;top:571.53px;font-size:21.5px;font-weight:400;color:#dc6b45;letter-spacing:0.337px">FoodContents2<i class="bl"></i></div>
<div class="t" id="r6a" style="left:674.96px;top:571.53px;font-size:21.5px;font-weight:400;color:#5f5f5f;letter-spacing:-0.256px">5HUm5SSFQ5teck5YzdzM<i class="bl"></i></div>
<div class="t" id="r7c" style="left:73.82px;top:612.99px;font-size:21.5px;font-weight:400;color:#dc6b45;letter-spacing:0.161px">Drivers-License<i class="bl"></i></div>
<div class="t" id="r7a" style="left:674.96px;top:612.99px;font-size:21.5px;font-weight:400;color:#5f5f5f;letter-spacing:0.348px">Dept.-of-Motor-Vehicles<i class="bl"></i></div>
<div class="t" id="r8c" style="left:73.82px;top:654.47px;font-size:21.5px;font-weight:400;color:#dc6b45;letter-spacing:0.360px">FoodAllergenes<i class="bl"></i></div>
<div class="t" id="r8a" style="left:674.96px;top:654.47px;font-size:21.5px;font-weight:400;color:#5f5f5f;letter-spacing:-0.327px">5EXvwodVuFFeGzozG8sq<i class="bl"></i></div>
<div class="t" id="r9c" style="left:75.62px;top:695.93px;font-size:21.5px;font-weight:400;color:#dc6b45;letter-spacing:0.675px">Abo<i class="bl"></i></div>
<div class="t" id="r9a" style="left:675.86px;top:695.93px;font-size:21.5px;font-weight:400;color:#5f5f5f;letter-spacing:-0.225px">Attester_M1<i class="bl"></i></div>
<div class="t" id="r10c" style="left:73.82px;top:737.41px;font-size:21.5px;font-weight:400;color:#dc6b45;letter-spacing:0.159px">DriversLicense<i class="bl"></i></div>
<div class="t" id="r10a" style="left:674.96px;top:737.41px;font-size:21.5px;font-weight:400;color:#5f5f5f;letter-spacing:-0.369px">5FmE4x7CYZfQ4RVY6Pnd<i class="bl"></i></div>
<div class="t" id="r11c" style="left:73.82px;top:778.88px;font-size:21.5px;font-weight:400;color:#dc6b45;letter-spacing:0.458px">FoodContents<i class="bl"></i></div>
<div class="t" id="r11a" style="left:674.96px;top:778.88px;font-size:21.5px;font-weight:400;color:#5f5f5f;letter-spacing:-0.256px">5HUm5SSFQ5teck5YzdzM<i class="bl"></i></div>
<div class="t" id="r12c" style="left:75.62px;top:820.35px;font-size:21.5px;font-weight:400;color:#dc6b45;letter-spacing:0.250px">AboEinzeln<i class="bl"></i></div>
<div class="t" id="r12a" style="left:675.86px;top:820.35px;font-size:21.5px;font-weight:400;color:#5f5f5f;letter-spacing:-0.225px">Attester_M1<i class="bl"></i></div>
<div class="t" id="r13c" style="left:75.62px;top:861.82px;font-size:21.5px;font-weight:400;color:#dc6b45;letter-spacing:-0.036px">T-DriversLicense<i class="bl"></i></div>
<div class="t" id="r13a" style="left:674.96px;top:861.82px;font-size:21.5px;font-weight:400;color:#5f5f5f;letter-spacing:-0.341px">5F187DcQbTfRfoDfPo45<i class="bl"></i></div>
</body></html>
